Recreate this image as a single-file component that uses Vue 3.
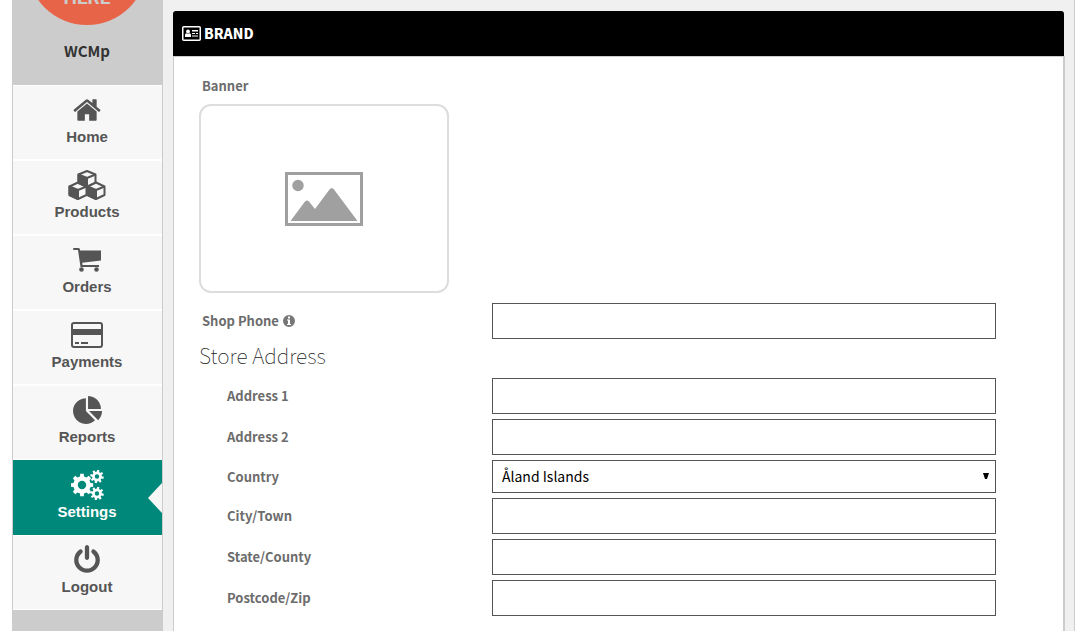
<script setup>
const menu = [
  { label: 'Home', icon: 'home' },
  { label: 'Products', icon: 'products' },
  { label: 'Orders', icon: 'orders' },
  { label: 'Payments', icon: 'payments' },
  { label: 'Reports', icon: 'reports' },
  { label: 'Settings', icon: 'settings', active: true },
  { label: 'Logout', icon: 'logout' },
]

const fields = [
  { id: 'address1', label: 'Address 1' },
  { id: 'address2', label: 'Address 2' },
  { id: 'country', label: 'Country', options: ['Åland Islands'] },
  { id: 'city', label: 'City/Town' },
  { id: 'state', label: 'State/County' },
  { id: 'postcode', label: 'Postcode/Zip' },
]

// Gear outline with square teeth, as an SVG path.
function gear(cx, cy, outer, inner, teeth, offset = 0) {
  const step = (Math.PI * 2) / teeth
  const points = []
  for (let i = 0; i < teeth; i++) {
    const a = i * step + offset
    const corners = [[-0.3, inner], [-0.2, outer], [0.2, outer], [0.3, inner]]
    for (const [f, r] of corners) {
      const t = a + f * step
      points.push(`${(cx + r * Math.cos(t)).toFixed(2)} ${(cy + r * Math.sin(t)).toFixed(2)}`)
    }
  }
  return `M${points.join('L')}Z`
}
function hole(cx, cy, r) {
  return `M${cx - r} ${cy}a${r} ${r} 0 1 0 ${2 * r} 0a${r} ${r} 0 1 0 ${-2 * r} 0Z`
}
const gears = [
  gear(11, 15, 11.3, 8.8, 8) + hole(11, 15, 4.2),
  gear(26, 6.5, 6.8, 4.9, 8, 0.2) + hole(26, 6.5, 2.2),
  gear(26, 23.5, 6.8, 4.9, 8, 0.2) + hole(26, 23.5, 2.2),
].join('')
</script>

<template>
  <div class="page">
    <aside class="sidebar">
      <div class="profile">
        <div class="logo"><span>HERE</span></div>
        <p class="store">WCMp</p>
      </div>
      <nav>
        <a v-for="item in menu" :key="item.label" href="#" class="item" :class="{ active: item.active }">
          <span class="glyph">
            <svg v-if="item.icon === 'home'" width="30" height="30" viewBox="0 0 1792 1792">
              <path d="M1472 992v480q0 26-19 45t-45 19h-384v-384h-256v384h-384q-26 0-45-19t-19-45v-480q0-1 .5-3t.5-3l575-474 575 474q1 2 1 6zm223-69l-62 74q-8 9-21 11h-3q-13 0-21-7l-692-577-692 577q-12 8-24 7-13-2-21-11l-62-74q-8-10-7-23.5t11-21.5l719-599q32-26 76-26t76 26l244 204v-195q0-14 9-23t23-9h192q14 0 23 9t9 23v408l219 182q10 8 11 21.5t-7 23.5z" />
            </svg>
            <svg v-else-if="item.icon === 'products'" width="38" height="30" viewBox="0 0 38 30">
              <g stroke="currentColor" stroke-width="2" stroke-linejoin="round">
                <path class="face" d="M19 1L27.500 4.500V13L19 17L10.500 13V4.500Z" />
                <path class="face" d="M10 12.500L18.500 16.500V25L10 29L1.500 25V16.500Z" />
                <path class="face" d="M28 12.500L36.500 16.500V25L28 29L19.500 25V16.500Z" />
                <path d="M10.500 4.500L19 8V17L10.500 13Z" />
                <path d="M1.500 16.500L10 20V29L1.500 25Z" />
                <path d="M19.500 16.500L28 20V29L19.500 25Z" />
                <path fill="none" d="M19 8L27.500 4.500M10 20L18.500 16.500M28 20L36.500 16.500" />
              </g>
            </svg>
            <svg v-else-if="item.icon === 'orders'" width="28" height="26" viewBox="0 0 28 26">
              <path d="M0 2Q0 1 1 1H5.500Q6.500 1 6.800 2L7.200 3.500H28V13.500L9.200 15.700L9.500 18H26V20H7.500L5 3H1Q0 3 0 2Z" />
              <circle cx="8.500" cy="22.500" r="2.300" /><circle cx="23.500" cy="22.500" r="2.300" />
            </svg>
            <svg v-else-if="item.icon === 'payments'" width="32" height="26" viewBox="0 0 32 26">
              <rect x="1" y="1" width="30" height="24" rx="2" fill="none" stroke="currentColor" stroke-width="2" />
              <path d="M1 7H31V13H1ZM4 20H8V22H4ZM10 20H17V22H10Z" />
            </svg>
            <svg v-else-if="item.icon === 'reports'" width="29" height="28" viewBox="0 0 1728 1664">
              <path d="M768 890l546 546q-106 108-247.500 168t-298.500 60q-209 0-385.500-103t-279.500-279.500-103-385.500 103-385.500 279.500-279.500 385.500-103v762zM955 896h773q0 157-60 298.500t-168 247.500zM1664 768h-768v-768q209 0 385.500 103t279.500 279.500 103 385.500z" />
            </svg>
            <svg v-else-if="item.icon === 'settings'" width="33" height="30" viewBox="0 0 33 30">
              <path :d="gears" fill-rule="evenodd" />
            </svg>
            <svg v-else width="30" height="30" viewBox="0 0 1792 1792">
              <path d="M1664 896q0 156-61 298t-164 245-245 164-298 61-298-61-245-164-164-245-61-298q0-182 80.500-343t226.500-270q43-32 95.500-25t83.500 50q32 42 24.500 94.500t-49.500 84.500q-98 74-151.500 181t-53.500 228q0 104 40.500 198.500t109.500 163.500 163.500 109.500 198.500 40.500 198.500-40.500 163.500-109.500 109.500-163.500 40.500-198.500q0-121-53.500-228t-151.500-181q-42-32-49.500-84.500t24.500-94.500q31-43 84-50t95 25q146 109 226.500 270t80.500 343zm-640-768v640q0 52-38 90t-90 38-90-38-38-90v-640q0-52 38-90t90-38 90 38 38 90z" />
            </svg>
          </span>
          <span>{{ item.label }}</span>
        </a>
      </nav>
    </aside>

    <main class="content">
      <section class="panel">
        <h2 class="panel-head">
          <svg width="19" height="15" viewBox="0 0 19 15">
            <rect x="0.750" y="0.750" width="17.500" height="13.500" rx="1" fill="none" stroke="currentColor" stroke-width="1.500" />
            <circle cx="6" cy="5.500" r="1.900" />
            <path d="M3 11V9Q3 7.500 4.500 7.300L6 8L7.500 7.300Q9 7.500 9 9V11ZM10 4H16V5.500H10ZM10 7H13V8H10ZM14 7H16V8H14ZM10 9.500H16V10.500H10Z" />
          </svg>
          <span>BRAND</span>
        </h2>
        <form class="panel-body" @submit.prevent>
          <p class="caption">Banner</p>
          <button type="button" class="banner" aria-label="Banner">
            <svg width="78" height="54" viewBox="0 0 78 54">
              <rect x="1.500" y="1.500" width="75" height="51" fill="none" stroke="currentColor" stroke-width="3" />
              <circle cx="13" cy="13.500" r="5.700" />
              <path d="M5.500 49L20 29.500Q22 27.500 24 29.500L30 37L44.500 17.500Q47 14.500 49 17.500L72.500 49Z" />
            </svg>
          </button>
          <div class="row phone">
            <label for="phone">Shop Phone
              <svg class="info" width="12" height="12" viewBox="0 0 12 12">
                <path fill-rule="evenodd" d="M6 0a6 6 0 1 1 0 12a6 6 0 1 1 0-12ZM5 1.500V3.500H7V1.500ZM4 4.500V5.500H5V9H4V10H8V9H7V4.500Z" />
              </svg>
            </label>
            <input id="phone" type="text" />
          </div>
          <h3 class="subtitle">Store Address</h3>
          <div v-for="field in fields" :key="field.id" class="row nested">
            <label :for="field.id">{{ field.label }}</label>
            <span v-if="field.options" class="select">
              <select :id="field.id">
                <option v-for="option in field.options" :key="option">{{ option }}</option>
              </select>
              <svg width="6" height="6" viewBox="0 0 6 6"><path d="M0 0H6L4 6H2Z" /></svg>
            </span>
            <input v-else :id="field.id" type="text" />
          </div>
        </form>
      </section>
    </main>
  </div>
</template>

<style>
body {
  background: #fff;
}
</style>

<style scoped>
* {
  box-sizing: border-box;
}
svg {
  fill: currentColor;
  display: block;
}
.page {
  display: flex;
  min-height: 100vh;
  margin: 0 10px 0 12px;
  border-right: 1px solid #ccc;
  background: #f0f0f0;
  font-family: "Noto Sans CJK JP", "Open Sans", sans-serif;
  font-size: 14px;
}
.sidebar {
  flex: 0 0 151px;
  border: solid #ccc;
  border-width: 0 1px;
  background: #ccc;
}
.profile {
  height: 85px;
  overflow: hidden;
  padding-right: 1px;
  text-align: center;
}
.logo {
  display: flex;
  align-items: center;
  justify-content: center;
  width: 120px;
  height: 120px;
  margin: -95px auto 0;
  padding-top: 66px;
  border-radius: 50%;
  background: #e86448;
  color: #ccc;
  font: bold 19px/24px Roboto, sans-serif;
}
.store {
  margin: 16px 0 0;
  color: #333;
  font-size: 15px;
  font-weight: 700;
  line-height: 20px;
}
.item {
  position: relative;
  display: flex;
  flex-direction: column;
  align-items: center;
  gap: 3px;
  height: 75px;
  padding: 8px 1px 0 0;
  border-top: 1px solid #fff;
  border-bottom: 1px solid #fff;
  background: #f7f7f7;
  color: #555;
  font: bold 15px/18px "Liberation Sans", Arial, sans-serif;
  text-decoration: none;
}
.glyph {
  display: grid;
  place-items: center;
  height: 31px;
}
.face {
  fill: #f7f7f7;
}
.active {
  border-color: #00897b;
  background: #00897b;
  color: #fff;
}
.active::after {
  content: "";
  position: absolute;
  top: 22px;
  right: 0;
  border: solid transparent;
  border-width: 15px 14px 15px 0;
  border-right-color: #f7f7f7;
}
.content {
  flex: 1;
  display: flex;
  padding: 11px 9px 0 10px;
}
.panel {
  flex: 1;
  display: flex;
  flex-direction: column;
}
.panel-head {
  display: flex;
  align-items: center;
  gap: 3px;
  height: 45px;
  margin: 0 1px 0 0;
  padding: 0 9px 1px;
  border-radius: 3px 3px 0 0;
  background: #000;
  color: #fff;
  font-size: 14px;
  font-weight: 900;
}
.panel-body {
  flex: 1;
  padding: 19px 67px 15px 25px;
  border: solid #ccc;
  border-width: 1px 2px 0 1px;
  background: #fff;
}
.caption,
.row label {
  color: #6c6c6c;
  font-size: 13px;
  font-weight: 700;
  line-height: 20px;
}
.caption {
  margin: 0 0 8px 3px;
}
.banner {
  display: grid;
  place-items: center;
  width: 250px;
  height: 189px;
  border: 2px solid #ddd;
  border-radius: 12px;
  background: #fff;
  color: #a0a0a0;
}
.row {
  display: grid;
  grid-template-columns: 290px 1fr;
  align-items: center;
  margin-bottom: 5px;
  padding-left: 3px;
}
.phone {
  margin: 10px 0 0;
}
.nested {
  grid-template-columns: 265px 1fr;
  padding-left: 28px;
}
.row label {
  display: flex;
  align-items: center;
  gap: 4px;
}
.info {
  color: #777;
}
input,
select {
  width: 100%;
  height: 36px;
  padding: 0 9px;
  border: 1px solid #555;
  border-radius: 0;
  background: #fff;
  color: #000;
  font: 400 14px "Noto Sans CJK JP", sans-serif;
}
select {
  display: block;
  height: 33px;
  padding-bottom: 2px;
  appearance: none;
}
.select {
  display: grid;
  align-items: center;
}
.select > * {
  grid-area: 1 / 1;
}
.select svg {
  justify-self: end;
  margin: 0 7px 2px 0;
  pointer-events: none;
  z-index: 1;
}
.subtitle {
  margin: 0;
  height: 39px;
  color: #222;
  font-size: 21px;
  font-weight: 100;
  line-height: 32px;
}
</style>
